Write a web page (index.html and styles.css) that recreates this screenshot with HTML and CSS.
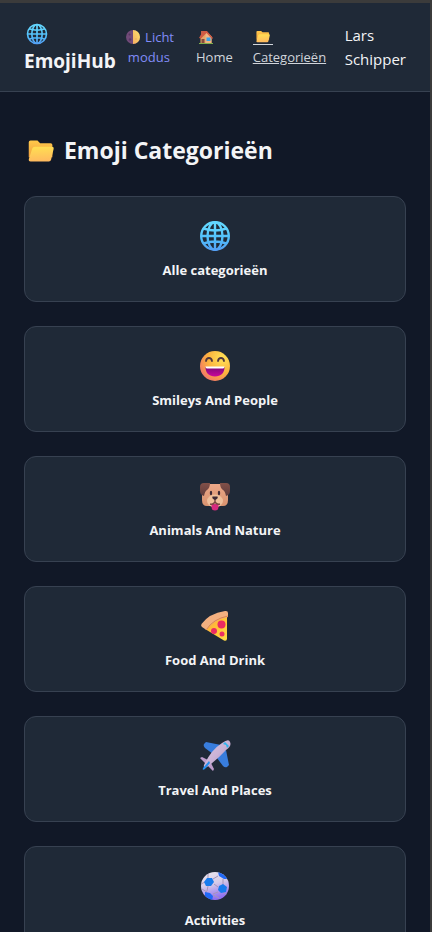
FILE: index.html
```html
<!DOCTYPE html>
<html lang="nl">
<head>
<meta charset="utf-8">
<meta name="viewport" content="width=device-width, initial-scale=1">
<title>EmojiHub</title>
<link rel="stylesheet" href="styles.css">
</head>
<body>
<svg class="sprite" aria-hidden="true">
  <defs>
    <linearGradient id="g-globe" x1="0" y1="0" x2="0" y2="32" gradientUnits="userSpaceOnUse"><stop offset=".2" stop-color="#62d6ff"/><stop offset=".6" stop-color="#50bdfa"/><stop offset="1" stop-color="#559cf5"/></linearGradient>
    <linearGradient id="g-back" x1="0" y1="0" x2="0" y2="1"><stop offset="0" stop-color="#ffc84a"/><stop offset="1" stop-color="#f0a040"/></linearGradient>
    <linearGradient id="g-front" x1=".4" y1="0" x2=".5" y2="1"><stop offset="0" stop-color="#ffdf52"/><stop offset="1" stop-color="#ffb95f"/></linearGradient>
    <radialGradient id="g-face" cx=".75" cy=".25" r=".9"><stop offset="0" stop-color="#ffe357"/><stop offset=".55" stop-color="#fcb23e"/><stop offset="1" stop-color="#f2706c"/></radialGradient>
    <linearGradient id="g-mouth" x1="0" y1="0" x2="0" y2="1"><stop offset="0" stop-color="#7c0a78"/><stop offset="1" stop-color="#c9089b"/></linearGradient>
    <linearGradient id="g-fur" x1="0" y1="0" x2="0" y2="1"><stop offset="0" stop-color="#eca888"/><stop offset="1" stop-color="#d9936f"/></linearGradient>
    <linearGradient id="g-ear" x1="0" y1="0" x2="0" y2="1"><stop offset="0" stop-color="#825048"/><stop offset="1" stop-color="#5f3c3c"/></linearGradient>
    <linearGradient id="g-cheese" x1="0" y1="0" x2="1" y2="1"><stop offset="0" stop-color="#fc9e43"/><stop offset=".6" stop-color="#ffc936"/><stop offset="1" stop-color="#ffdb48"/></linearGradient>
    <linearGradient id="g-body" x1="0" y1="0" x2="1" y2="1"><stop offset="0" stop-color="#d7c5de"/><stop offset=".5" stop-color="#cbb3d6"/><stop offset="1" stop-color="#a58dbd"/></linearGradient>
    <linearGradient id="g-ball" x1="0" y1="0" x2=".3" y2="1"><stop offset="0" stop-color="#eee9ee"/><stop offset=".5" stop-color="#d5cbe9"/><stop offset="1" stop-color="#9272f0"/></linearGradient>
    <linearGradient id="g-moon" x1="1" y1="0" x2="0" y2="1"><stop offset="0" stop-color="#ffe36b"/><stop offset="1" stop-color="#f6ae62"/></linearGradient>
    <clipPath id="c-ball"><circle cx="16" cy="16" r="14"/></clipPath>
  </defs>
  <symbol id="globe" viewBox="0 0 32 32">
    <g fill="none" stroke="url(#g-globe)" stroke-width="2.400">
      <circle cx="16" cy="16" r="13.800"/>
      <ellipse cx="16" cy="16" rx="7.5" ry="13.800"/>
      <path d="M16 2v28M2 16.01h28M4.500 8.500Q16 12.500 27.500 8.500M4.500 23.500Q16 19.500 27.500 23.500"/>
    </g>
  </symbol>
  <symbol id="folder" viewBox="0 0 32 32">
    <path d="M2 6a2 2 0 0 1 2-2h8l3 3h12a2 2 0 0 1 2 2v14H2z" fill="url(#g-back)"/>
    <path d="M9 11h19.500q2.500 0 2 2.500l-3 12.500q-.5 2-2.500 2H4q-2.500 0-2-2.500l4-12.500q.6-2 3-2z" fill="url(#g-front)"/>
  </symbol>
  <symbol id="moon" viewBox="0 0 32 32">
    <circle cx="16" cy="16" r="14" fill="#704a78"/>
    <path d="M16 2a14 14 0 0 1 0 28z" fill="url(#g-moon)"/>
    <circle cx="9" cy="11" r="2" fill="#56385f"/><circle cx="10" cy="21" r="2.500" fill="#583766"/><circle cx="22" cy="20" r="2" fill="#f0b460"/>
  </symbol>
  <symbol id="house" viewBox="0 0 32 32">
    <path d="M6 4h5v9H6z" fill="#c0604c"/>
    <path d="M5 14 16 5l11 10v14H5z" fill="#e4a568"/>
    <path d="M16 5 27 15v14H15V12z" fill="#f0b583"/>
    <path d="m10 4 8 0 12 14-2 2L17 8 6 19l-4-1z" fill="#cf5a43"/>
    <path d="M7 20h6v9H7z" fill="#874a3c"/><path d="M17 17h8v7h-8z" fill="#38a1e8"/>
    <path d="M2 28h28v2H2z" fill="#7fae4a"/>
  </symbol>
  <symbol id="smile" viewBox="0 0 32 32">
    <circle cx="16" cy="16" r="15" fill="url(#g-face)"/>
    <path d="M7 11q.5-3 3-3t3 3M19 11q.5-3 3-3t3 3" fill="none" stroke="#51363d" stroke-width="1.800" stroke-linecap="round"/>
    <path d="M6.500 17h19c0 6-3.500 9.500-9.500 9.500S6.500 23 6.500 17z" fill="url(#g-mouth)"/>
    <path d="M6.500 16.500h19l-.2 1q-.3 1-1.500 1H8.200q-1.200 0-1.500-1z" fill="#fff"/>
  </symbol>
  <symbol id="dog" viewBox="0 0 32 32">
    <path d="M6 4h20q3 1 3 8v8q0 6-5 6H8q-5 0-5-6v-8q0-7 3-8z" fill="url(#g-fur)"/>
    <path d="M1 7q0-4 4-4h6q0 5-3 7-2 1-3 6-4-1-4-5zM31 7q0-4-4-4h-6q0 5 3 7 2 1 3 6 4-1 4-5z" fill="url(#g-ear)"/>
    <ellipse cx="16" cy="21" rx="8" ry="6.500" fill="#efc09b"/>
    <path d="M12.500 24h7v3q0 3.500-3.500 3.500T12.500 27z" fill="#d52a7e"/>
    <path d="M16 19v4M11 24q3 1 5-2 2 3 5 2" fill="none" stroke="#784541" stroke-width="1.400"/>
    <path d="M13.500 16.500h5q1 2-2.500 3.500-3.500-1.500-2.500-3.500z" fill="#3d2834"/>
    <ellipse cx="12" cy="13" rx="1.200" ry="2.200" fill="#3d2834"/><ellipse cx="20" cy="13" rx="1.200" ry="2.200" fill="#3d2834"/>
  </symbol>
  <symbol id="pizza" viewBox="0 0 32 32">
    <path d="M28 5v23.500q0 3-3 2L6 19Q13 8 28 5z" fill="url(#g-cheese)"/>
    <path d="M26 1q3-.5 3 2v4Q14 10 7.500 20L3 17q-1.500-1-.5-3Q10 3.500 26 1z" fill="#f3b080"/>
    <path d="M29 6Q14 9 7.500 19.500" fill="none" stroke="#d98453" stroke-width="1"/>
    <circle cx="22.500" cy="14.500" r="4" fill="#eb2b62"/><circle cx="15" cy="21" r="3" fill="#eb2b62"/><circle cx="23" cy="24" r="2.500" fill="#ec2e64"/>
  </symbol>
  <symbol id="plane" viewBox="0 0 32 32">
    <path d="M5 4 7 2l15 3-4 8-4 1-8-6q-2-2-1-4zM28 27l2-2-3-15-8 4-1 4 6 8q2 2 4 1z" fill="#387ddd"/>
    <path d="m1 18 2-1 8 4-3 4zM14 31l1-2-4-8-4 3z" fill="#bd9ccb"/>
    <path d="M5 25Q12 10 23 3q7-5 8-1 2 4-4 8-8 9-19 17-4 2-3-2z" fill="url(#g-body)"/>
    <path d="m4 28 6-7 1 2-5 6q-3 2-2-1z" fill="#258ff0"/>
    <path d="m24 4 2-2 4 4-2 2-1-3z" fill="#31b5ee"/>
  </symbol>
  <symbol id="ball" viewBox="0 0 32 32">
    <circle cx="16" cy="16" r="14" fill="url(#g-ball)"/>
    <g clip-path="url(#c-ball)">
      <path d="m14 9 5-3M15 14l4 3M9 16l-1 5M6 12l-4 2M9 8V3M24 9v6M19 22l-5 2M24 22l4 3M8 22l-5-3M14 25l6 3" fill="none" stroke="#a795b7" stroke-width="1"/>
      <path d="m8 8 5 0 2 4-3 4-5 0-2-4zM20 16l4-2 4 3-1 5-5 1-3-3z" fill="#187bed"/>
      <path d="m19 2 6 1 4 6-4 0-5-3zM6 22l5 1 3 3-1 5-7-3z" fill="#2169f6"/>
    </g>
  </symbol>
</svg>

<header class="navbar">
  <a class="brand" href="#"><svg class="icon" aria-hidden="true"><use href="#globe"/></svg> EmojiHub</a>
  <button class="theme" type="button"><span class="nowrap"><svg class="icon" aria-hidden="true"><use href="#moon"/></svg> Licht</span> modus</button>
  <nav class="links">
    <a href="#"><svg class="icon" aria-hidden="true"><use href="#house"/></svg> Home</a>
    <a class="active" href="#"><svg class="icon" aria-hidden="true"><use href="#folder"/></svg> Categorieën</a>
  </nav>
  <span class="user">Lars Schipper</span>
</header>

<main>
  <h1><svg class="icon" aria-hidden="true"><use href="#folder"/></svg> Emoji Categorieën</h1>
  <div class="cards">
    <a class="card" href="#"><svg class="emoji" aria-hidden="true"><use href="#globe"/></svg><span>Alle categorieën</span></a>
    <a class="card" href="#"><svg class="emoji" aria-hidden="true"><use href="#smile"/></svg><span>Smileys And People</span></a>
    <a class="card" href="#"><svg class="emoji" aria-hidden="true"><use href="#dog"/></svg><span>Animals And Nature</span></a>
    <a class="card" href="#"><svg class="emoji" aria-hidden="true"><use href="#pizza"/></svg><span>Food And Drink</span></a>
    <a class="card" href="#"><svg class="emoji" aria-hidden="true"><use href="#plane"/></svg><span>Travel And Places</span></a>
    <a class="card" href="#"><svg class="emoji" aria-hidden="true"><use href="#ball"/></svg><span>Activities</span></a>
  </div>
</main>
</body>
</html>
```
FILE: styles.css
```css
* {
  box-sizing: border-box;
}

html {
  background: #111827;
  scrollbar-width: none;
}

body {
  margin: 0;
  border-top: 3px solid #3b3b3b;
  border-right: 2px solid #3b3b3b;
  background: #111827;
  color: #f3f4f6;
  font-family: "Segoe UI", "Open Sans", "Noto Sans", sans-serif;
  font-size: 15px;
}

a {
  color: inherit;
  text-decoration: none;
}

.sprite {
  position: absolute;
  width: 0;
  height: 0;
}

.navbar {
  display: flex;
  align-items: center;
  padding: 16px 24px;
  background: #1f2937;
  border-bottom: 1px solid #374151;
}

.brand {
  width: min-content;
  font-size: 19px;
  font-weight: 700;
  line-height: 28px;
}

.icon {
  box-sizing: content-box;
  width: 16px;
  height: 16px;
  padding: 0 2px;
  vertical-align: -3px;
}

.brand .icon {
  width: 22px;
  height: 22px;
  vertical-align: -5px;
}

.nowrap {
  white-space: nowrap;
}

.theme {
  margin: 0 22px 0 8px;
  padding: 0;
  width: min-content;
  border: 0;
  background: none;
  color: #818cf8;
  font: inherit;
  font-size: 13px;
  line-height: 20px;
  white-space: normal;
}

.theme .icon {
  padding: 0 1px;
}

.links {
  display: flex;
  gap: 20px;
  color: #d1d5db;
  font-size: 13px;
  line-height: 20px;
}

.links a {
  width: min-content;
}

.links .active {
  text-decoration: underline;
}

.active .icon {
  height: 15px;
  border-bottom: 1px solid #d1d5db;
}

.user {
  width: min-content;
  margin-left: auto;
  line-height: 24px;
}

main {
  padding: 40px 24px;
}

h1 {
  margin: 0 0 28px;
  font-size: 23px;
  font-weight: 700;
  line-height: 36px;
}

h1 .icon {
  width: 28px;
  height: 28px;
  padding: 0 3px;
  vertical-align: -6px;
}

.cards {
  display: grid;
  grid-template-columns: repeat(auto-fill, minmax(240px, 1fr));
  gap: 24px;
}

.card {
  display: flex;
  flex-direction: column;
  align-items: center;
  gap: 8px;
  padding: 23px 16px 21px;
  border: 1px solid #374151;
  border-radius: 12px;
  background: #1f2937;
  font-size: 13px;
  font-weight: 700;
  line-height: 20px;
}

.emoji {
  width: 32px;
  height: 32px;
}
```
